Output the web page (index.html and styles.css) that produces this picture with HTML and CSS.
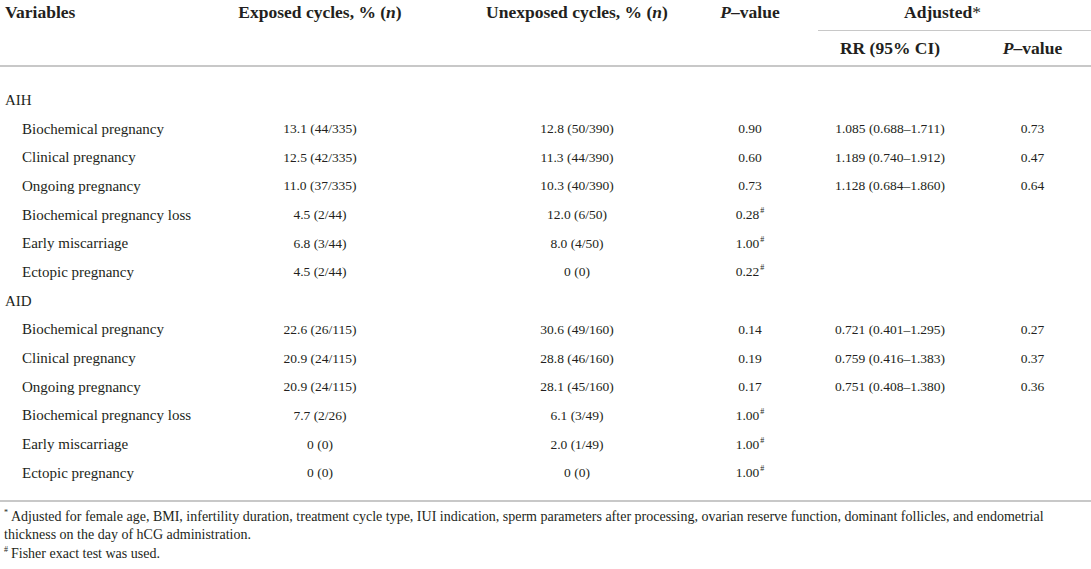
FILE: index.html
```html
<!DOCTYPE html>
<html lang="en">
<head>
  <meta charset="UTF-8" />
  <meta name="viewport" content="width=device-width, initial-scale=1.0"/>
  <title>Pregnancy outcomes by exposure</title>
  <link rel="stylesheet" href="styles.css">
</head>
<body>
  <div class="table-wrap">
    <table class="outcomes">
      <colgroup>
        <col class="col-var" />
        <col class="col-exp" />
        <col class="col-unexp" />
        <col class="col-p" />
        <col class="col-rr" />
        <col class="col-padj" />
      </colgroup>
      <thead>
        <tr>
          <th rowspan="2" class="left top">Variables</th>
          <th rowspan="2" class="top">Exposed cycles, % (<i>n</i>)</th>
          <th rowspan="2" class="top">Unexposed cycles, % (<i>n</i>)</th>
          <th rowspan="2" class="top"><i>P</i>–value</th>
          <th colspan="2" class="adjusted"><div class="adjusted-label">Adjusted<span class="star">*</span></div></th>
        </tr>
        <tr>
          <th class="sub">RR (95% CI)</th>
          <th class="sub padj"><i>P</i>–value</th>
        </tr>
      </thead>
      <tbody>
        <tr class="group first"><td colspan="6">AIH</td></tr>
        <tr><td class="item">Biochemical pregnancy</td><td>13.1 (44/335)</td><td>12.8 (50/390)</td><td>0.90</td><td>1.085 (0.688–1.711)</td><td class="padj">0.73</td></tr>
        <tr><td class="item">Clinical pregnancy</td><td>12.5 (42/335)</td><td>11.3 (44/390)</td><td>0.60</td><td>1.189 (0.740–1.912)</td><td class="padj">0.47</td></tr>
        <tr><td class="item">Ongoing pregnancy</td><td>11.0 (37/335)</td><td>10.3 (40/390)</td><td>0.73</td><td>1.128 (0.684–1.860)</td><td class="padj">0.64</td></tr>
        <tr><td class="item">Biochemical pregnancy loss</td><td>4.5 (2/44)</td><td>12.0 (6/50)</td><td>0.28<sup class="mark">#</sup></td><td></td><td class="padj"></td></tr>
        <tr><td class="item">Early miscarriage</td><td>6.8 (3/44)</td><td>8.0 (4/50)</td><td>1.00<sup class="mark">#</sup></td><td></td><td class="padj"></td></tr>
        <tr><td class="item">Ectopic pregnancy</td><td>4.5 (2/44)</td><td>0 (0)</td><td>0.22<sup class="mark">#</sup></td><td></td><td class="padj"></td></tr>
        <tr class="group"><td colspan="6">AID</td></tr>
        <tr><td class="item">Biochemical pregnancy</td><td>22.6 (26/115)</td><td>30.6 (49/160)</td><td>0.14</td><td>0.721 (0.401–1.295)</td><td class="padj">0.27</td></tr>
        <tr><td class="item">Clinical pregnancy</td><td>20.9 (24/115)</td><td>28.8 (46/160)</td><td>0.19</td><td>0.759 (0.416–1.383)</td><td class="padj">0.37</td></tr>
        <tr><td class="item">Ongoing pregnancy</td><td>20.9 (24/115)</td><td>28.1 (45/160)</td><td>0.17</td><td>0.751 (0.408–1.380)</td><td class="padj">0.36</td></tr>
        <tr><td class="item">Biochemical pregnancy loss</td><td>7.7 (2/26)</td><td>6.1 (3/49)</td><td>1.00<sup class="mark">#</sup></td><td></td><td class="padj"></td></tr>
        <tr><td class="item">Early miscarriage</td><td>0 (0)</td><td>2.0 (1/49)</td><td>1.00<sup class="mark">#</sup></td><td></td><td class="padj"></td></tr>
        <tr class="last"><td class="item">Ectopic pregnancy</td><td>0 (0)</td><td>0 (0)</td><td>1.00<sup class="mark">#</sup></td><td></td><td class="padj"></td></tr>
      </tbody>
    </table>

    <div class="footnotes">
      <p><sup>*</sup>Adjusted for female age, BMI, infertility duration, treatment cycle type, IUI indication, sperm parameters after processing, ovarian reserve function, dominant follicles, and endometrial thickness on the day of hCG administration.</p>
      <p><sup>#</sup>Fisher exact test was used.</p>
    </div>
  </div>
</body>
</html>
```

FILE: styles.css
```css
:root {
  --text-dark: #231f20;
  --rule-grey: #c8c8c8;
  --serif: 'Liberation Serif', 'Times New Roman', serif;
}

body {
  margin: 0;
  padding: 0;
  background-color: #ffffff;
  color: var(--text-dark);
  font-family: var(--serif);
}

.table-wrap {
  width: 1091px;
}

.outcomes {
  width: 1091px;
  border-collapse: collapse;
  table-layout: fixed;
}

.col-var { width: 200px; }
.col-exp { width: 240px; }
.col-unexp { width: 274px; }
.col-p { width: 72px; }
.col-rr { width: 208px; }
.col-padj { width: 97px; }

thead {
  border-bottom: 2px solid var(--rule-grey);
}

tbody {
  border-bottom: 2px solid var(--rule-grey);
}

th {
  font-size: 17.5px;
  font-weight: bold;
  line-height: 20px;
  text-align: center;
  padding: 0;
  white-space: nowrap;
}

th.top {
  vertical-align: top;
  padding-top: 2px;
}

th.left {
  text-align: left;
  padding-left: 5px;
}

th.adjusted {
  padding: 2px 0 0 32px;
  vertical-align: top;
}

.adjusted-label {
  padding: 0 24px 8px 0;
  border-bottom: 1.5px solid var(--rule-grey);
}

.star {
  font-weight: normal;
}

th.sub {
  padding: 7px 0;
}

.padj {
  padding-right: 20px !important;
}

td {
  font-size: 13.5px;
  height: 28.7px;
  padding: 0;
  text-align: center;
  vertical-align: middle;
  white-space: nowrap;
}

td.item,
.group td {
  text-align: left;
  font-size: 15px;
}

td.item {
  padding-left: 22px;
}

.group td {
  padding-left: 5px;
}

.first td {
  padding-top: 19px;
}

.last td {
  padding-bottom: 12px;
}

.mark {
  font-size: 8px;
  line-height: 0;
  vertical-align: 6px;
  margin-left: 1px;
}

.footnotes {
  padding: 6px 0 0 4px;
  font-size: 14px;
  line-height: 18.5px;
}

.footnotes p {
  margin: 0;
}

.footnotes sup {
  display: inline-block;
  width: 5px;
  font-size: 8px;
  line-height: 8px;
  vertical-align: 6px;
  margin-right: 2px;
}
```
